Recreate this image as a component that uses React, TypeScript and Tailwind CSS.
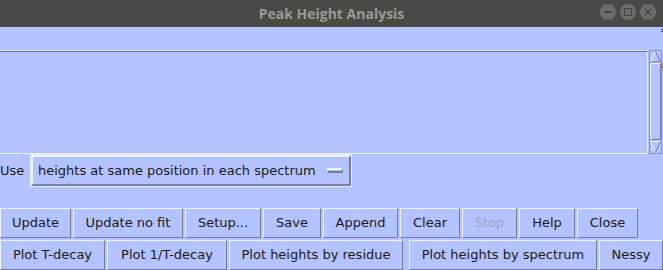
import React from "react";

const FONT = { fontFamily: '"DejaVu Sans", "Liberation Sans", sans-serif' };

function Btn({ w, label, disabled }: { w: number; label: string; disabled?: boolean }) {
  return (
    <div
      className={`h-[30px] shrink-0 flex items-center justify-center border border-t-[#f2f4ff] border-l-[#f2f4ff] border-b-[#767b99] border-r-[#767b99] text-[13px] ${
        disabled ? "text-[#a2a6bc]" : "text-[#1c1a18]"
      }`}
      style={{ width: w }}
    >
      {label}
    </div>
  );
}

function Scrollbar() {
  return (
    <svg width="13" height="104" viewBox="0 0 13 104" className="block shrink-0">
      <rect x="0.5" y="0.5" width="12" height="103" fill="#b3c3ff" stroke="#8c91b0" />
      {/* up arrow */}
      <polyline points="1.5,12 6.5,1.5" stroke="#f2f4ff" strokeWidth="1" fill="none" />
      <polyline points="6.5,1.5 11.5,12 1.5,12" stroke="#767b99" strokeWidth="1" fill="none" />
      {/* slider */}
      <rect x="1.5" y="13.5" width="10" height="76" fill="#b3c3ff" stroke="#767b99" />
      <polyline points="1.5,89.5 1.5,13.5 11.5,13.5" stroke="#f2f4ff" strokeWidth="1" fill="none" />
      {/* down arrow */}
      <polyline points="11.5,91.5 1.5,91.5 6.5,102" stroke="#f2f4ff" strokeWidth="1" fill="none" />
      <polyline points="6.5,102 11.5,91.5" stroke="#767b99" strokeWidth="1" fill="none" />
    </svg>
  );
}

export default function App() {
  return (
    <div className="w-[663px] h-[270px] bg-[#b3c3ff] overflow-hidden relative" style={FONT}>
      {/* title bar */}
      <div className="h-[27px] bg-[#4b4945] flex items-center justify-center relative">
        <span
          className="text-[14px] font-bold text-[#9c9993] ml-[0px]"
          style={{ fontFamily: '"Open Sans", "DejaVu Sans", sans-serif' }}
        >
          Peak Height Analysis
        </span>
        <div className="absolute left-[600px] top-[4px] flex gap-[4px]">
          <div className="w-[16px] h-[16px] rounded-full bg-[#6d6b67] flex items-center justify-center">
            <div className="w-[8px] h-[1.5px] bg-[#474641]" />
          </div>
          <div className="w-[16px] h-[16px] rounded-full bg-[#6d6b67] flex items-center justify-center">
            <div className="w-[8px] h-[8px] border-[1.5px] border-[#474641]" />
          </div>
          <div className="w-[16px] h-[16px] rounded-full bg-[#6d6b67] flex items-center justify-center">
            <svg width="8" height="8" viewBox="0 0 8 8">
              <path d="M1 1 L7 7 M7 1 L1 7" stroke="#474641" strokeWidth="1.4" />
            </svg>
          </div>
        </div>
      </div>

      <div className="h-[23px]" />

      {/* text area + scrollbar */}
      <div className="flex h-[104px]">
        <div className="w-[648px] h-[104px] flex flex-col border-t border-t-[#e2e7ff]">
          <div className="flex-1 border-t border-t-[#6c7191] border-r border-r-[#f0f3ff] border-b border-b-[#f0f3ff]" />
        </div>
        <div className="w-[1px]" />
        <Scrollbar />
      </div>

      {/* option row */}
      <div className="flex items-center h-[33px]">
        <div className="w-[30px] text-[13px] text-[#1c1a18]">Use</div>
        <div className="w-[322px] h-[33px] border border-[#e4e9ff] flex">
          <div className="flex-1 flex items-center justify-between pl-[5px] pr-[6px] border-2 border-t-[#eef1ff] border-l-[#eef1ff] border-b-[#7a7f9e] border-r-[#7a7f9e]">
            <span className="text-[13px] text-[#241a14]">heights at same position in each spectrum</span>
            <div className="w-[16px] h-[5px] border-t-2 border-l border-t-[#f2f4ff] border-l-[#f2f4ff] border-b-2 border-r border-b-[#767b99] border-r-[#767b99]" />
          </div>
        </div>
      </div>

      {/* buttons */}
      <div className="mt-[21px] flex gap-[2px]">
        <Btn w={71} label="Update" />
        <Btn w={110} label="Update no fit" />
        <Btn w={76} label="Setup..." />
        <Btn w={58} label="Save" />
        <Btn w={75} label="Append" />
        <Btn w={60} label="Clear" />
        <Btn w={55} label="Stop" disabled />
        <Btn w={56} label="Help" />
        <Btn w={61} label="Close" />
      </div>
      <div className="mt-[2px] flex gap-[2px]">
        <Btn w={105} label="Plot T-decay" />
        <Btn w={120} label="Plot 1/T-decay" />
        <Btn w={174} label="Plot heights by residue" />
        <div className="w-[2px]" />
        <Btn w={188} label="Plot heights by spectrum" />
        <Btn w={64} label="Nessy" />
      </div>

      {/* right-edge artifacts */}
      <div className="absolute left-[661px] top-[29px] w-[2px] h-[1px] bg-[#2b3a8a]" />
      <div className="absolute left-[661px] top-[31px] w-[2px] h-[1px] bg-[#2b3a8a]" />
      <div className="absolute left-[662px] top-[63px] w-[1px] h-[2px] bg-[#c07a30]" />
      <div className="absolute left-[662px] top-[66px] w-[1px] h-[2px] bg-[#5a4020]" />
      <div className="absolute left-[662px] top-[69px] w-[1px] h-[1px] bg-[#c07a30]" />
    </div>
  );
}
